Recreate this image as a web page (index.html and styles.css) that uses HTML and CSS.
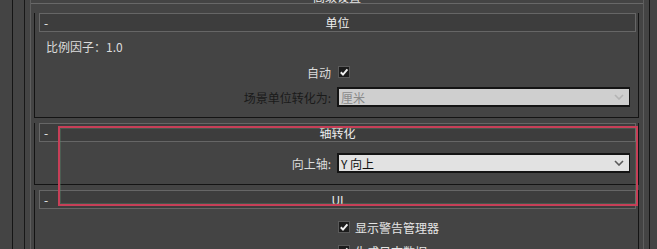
FILE: index.html
```html
<!DOCTYPE html>
<html lang="zh-CN">
<head>
    <meta charset="UTF-8">
    <title>导出设置</title>
    <link rel="stylesheet" href="styles.css">
</head>
<body>

<div class="shell">
    <div class="inner">
        <div class="panel">
            <div class="top-head"><span>高级设置</span></div>

            <!-- 单位 -->
            <div class="rollout rollout-first">
                <div class="rollout-head"><span class="toggle">-</span><span class="title">单位</span></div>
                <div class="rollout-body units">
                    <div class="scale">比例因子：1.0</div>
                    <div class="form-row">
                        <label>自动</label>
                        <span class="check">
                            <svg width="12" height="12" viewBox="0 0 12 12"><rect x="0.5" y="0.5" width="11" height="11" fill="#1c1c1c" stroke="#5a5a5a"/><path d="M2.8 6.2 L5 8.6 L9.4 3.4" fill="none" stroke="#f0f0f0" stroke-width="2"/></svg>
                        </span>
                    </div>
                    <div class="form-row">
                        <label class="disabled">场景单位转化为:</label>
                        <div class="select select-disabled">
                            <span>厘米</span>
                            <svg class="chev" width="10" height="6" viewBox="0 0 10 6"><path d="M1 1 L5 5 L9 1" fill="none" stroke="#b4b4b4" stroke-width="1.6"/></svg>
                        </div>
                    </div>
                </div>
            </div>

            <!-- 轴转化 -->
            <div class="rollout">
                <div class="rollout-head"><span class="toggle">-</span><span class="title">轴转化</span></div>
                <div class="rollout-body axis">
                    <div class="form-row">
                        <label>向上轴:</label>
                        <div class="select">
                            <span>Y 向上</span>
                            <svg class="chev" width="10" height="6" viewBox="0 0 10 6"><path d="M1 1 L5 5 L9 1" fill="none" stroke="#5a5a5a" stroke-width="1.6"/></svg>
                        </div>
                    </div>
                </div>
            </div>

            <!-- UI -->
            <div class="rollout">
                <div class="rollout-head"><span class="toggle">-</span><span class="title">UI</span></div>
                <div class="rollout-body ui">
                    <div class="form-row">
                        <span></span>
                        <div class="check-item">
                            <svg width="12" height="12" viewBox="0 0 12 12"><rect x="0.5" y="0.5" width="11" height="11" fill="#1c1c1c" stroke="#5a5a5a"/><path d="M2.8 6.2 L5 8.6 L9.4 3.4" fill="none" stroke="#f0f0f0" stroke-width="2"/></svg>
                            <span>显示警告管理器</span>
                        </div>
                    </div>
                    <div class="form-row">
                        <span></span>
                        <div class="check-item">
                            <svg width="12" height="12" viewBox="0 0 12 12"><rect x="0.5" y="0.5" width="11" height="11" fill="#1c1c1c" stroke="#5a5a5a"/><path d="M2.8 6.2 L5 8.6 L9.4 3.4" fill="none" stroke="#f0f0f0" stroke-width="2"/></svg>
                            <span>生成日志数据</span>
                        </div>
                    </div>
                </div>
            </div>
        </div>
    </div>
</div>

<!-- annotation box drawn over the panel -->
<div class="highlight"></div>

</body>
</html>
```

FILE: styles.css
```css
body {
    margin: 0;
    background: #444444;
    font-family: "Noto Sans CJK SC", "Noto Sans", sans-serif;
    font-size: 12px;
    color: #dcdcdc;
    height: 249px;
    overflow: hidden;
    position: relative;
}

.shell {
    box-sizing: border-box;
    margin-left: 12px;
    width: 638px;
    height: 249px;
    border-left: 1px solid #151515;
    border-right: 1px solid #151515;
}

.inner {
    margin-left: 11px;
    height: 100%;
    border-left: 1px solid #181818;
}

.panel {
    margin: 0 5px;
    height: 100%;
    border-left: 1px solid #5e5e5e;
    border-right: 1px solid #5e5e5e;
}

.top-head {
    height: 3px;
    border-bottom: 1px solid #686868;
    display: flex;
    justify-content: center;
    align-items: flex-end;
    overflow: hidden;
    color: #e8e8e8;
}

.top-head span {
    line-height: 12px;
    flex-shrink: 0;
}

/* rollouts */

.rollout {
    margin: 13px 4px 0 3px;
    border: 1px solid #141414;
    border-top: none;
}

.rollout-first {
    margin-top: 17px;
}

.rollout-head {
    box-sizing: border-box;
    height: 19px;
    margin: -8px 2px 0 4px;
    border: 1px solid #666666;
    background: #3d3d3d;
    display: flex;
    align-items: center;
    color: #eeeeee;
}

.rollout-head .toggle {
    width: 12px;
    padding-left: 4px;
    line-height: 16px;
}

.rollout-head .title {
    flex: 1;
    text-align: center;
    margin-right: 16px;
    line-height: 16px;
}

.rollout-body {
    display: flex;
    flex-direction: column;
}

.units {
    padding: 5px 0 10px;
    gap: 5px;
}

.axis {
    padding: 11px 0 11px;
}

.ui {
    padding: 8px 0 4px;
    gap: 4px;
}

.scale {
    line-height: 20px;
    padding-left: 11px;
}

.form-row {
    display: grid;
    grid-template-columns: 296px 293px;
    column-gap: 6px;
    align-items: center;
    height: 20px;
}

.form-row label {
    text-align: right;
}

.form-row label.disabled {
    color: #1a1a1a;
}

.check {
    display: flex;
    padding-left: 1px;
}

.check-item {
    display: flex;
    align-items: center;
    gap: 5px;
    padding-left: 1px;
    color: #e4e4e4;
}

.select {
    box-sizing: border-box;
    height: 20px;
    background: #e2e2e2;
    border: 2px solid #141414;
    border-right-width: 1px;
    display: flex;
    align-items: center;
    justify-content: space-between;
    padding: 0 5px 0 2px;
    color: #111111;
}

.select-disabled {
    background: #cfcfcf;
    color: #8a8a8a;
}

.chev {
    display: block;
}

.highlight {
    position: absolute;
    left: 58px;
    top: 126px;
    width: 576px;
    height: 76px;
    border: 2px solid #c73f58;
    box-shadow: inset 0 0 0 1px rgba(90, 140, 110, 0.35);
}
```
